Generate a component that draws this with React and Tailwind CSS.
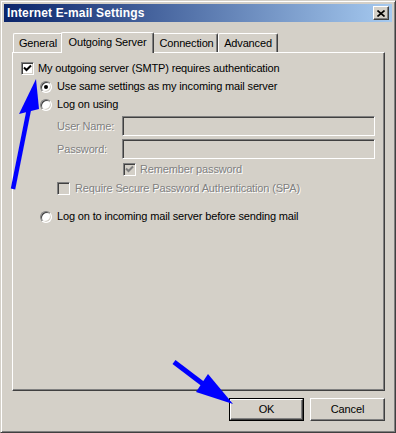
const face = 'bg-[#d4d0c8]'
const raised =
  'border border-t-white border-l-white border-r-[#404040] border-b-[#404040] shadow-[inset_-1px_-1px_0_#808080]'
const sunken =
  'border border-t-[#808080] border-l-[#808080] border-r-white border-b-white shadow-[inset_1px_1px_0_#404040,inset_-1px_-1px_0_#d4d0c8]'
const disabledText = 'text-[#808080] [text-shadow:1px_1px_0_#ffffff]'

function Checkbox({ checked, disabled }) {
  return (
    <div className={`flex h-[13px] w-[13px] shrink-0 items-center justify-center ${sunken} ${disabled ? 'bg-[#d4d0c8]' : 'bg-white'}`}>
      {checked && (
        <svg width="9" height="9" viewBox="0 0 9 9">
          <polyline points="1,3.5 3.5,6 8,1.5" fill="none" stroke={disabled ? '#808080' : '#000'} strokeWidth="2" />
        </svg>
      )}
    </div>
  )
}

function Radio({ checked }) {
  return (
    <div className={`flex h-[12px] w-[12px] shrink-0 items-center justify-center rounded-full bg-white ${sunken}`}>
      {checked && <div className="h-[4px] w-[4px] rounded-full bg-black" />}
    </div>
  )
}

function Tab({ label, selected, className = '' }) {
  if (selected) {
    return (
      <div
        className={`relative z-10 -mx-[2px] -mb-px flex h-[21px] items-start justify-center whitespace-nowrap rounded-t-[2px] border-t border-l border-r border-t-white border-l-white border-r-[#404040] ${face} pt-[3px] shadow-[inset_-1px_0_0_#808080] ${className}`}
      >
        {label}
      </div>
    )
  }
  return (
    <div
      className={`flex h-[19px] items-start justify-center whitespace-nowrap rounded-t-[2px] border-t border-l border-r border-t-white border-l-white border-r-[#404040] ${face} pt-[3px] shadow-[inset_-1px_0_0_#808080] ${className}`}
    >
      {label}
    </div>
  )
}

function Arrows() {
  return (
    <svg className="pointer-events-none absolute left-0 top-0" width="396" height="433" viewBox="0 0 396 433">
      <line x1="12" y1="188" x2="28" y2="108" stroke="#0000ff" strokeWidth="4.5" />
      <polygon points="35,78 18,113 38,108" fill="#0000ff" />
      <line x1="173" y1="361" x2="202" y2="383" stroke="#0000ff" strokeWidth="5" />
      <polygon points="232,403 195,391 207,373" fill="#0000ff" />
    </svg>
  )
}

export default function App() {
  return (
    <div
      className={`relative h-[433px] w-[396px] overflow-hidden ${face} border border-t-[#d4d0c8] border-l-[#d4d0c8] border-r-[#404040] border-b-[#404040] p-[3px] text-[11px] leading-[13px] tracking-[-0.15px] text-black shadow-[inset_1px_1px_0_#ffffff,inset_-1px_-1px_0_#808080]`}
      style={{ fontFamily: '"Liberation Sans", Arial, sans-serif' }}
    >
      {/* title bar */}
      <div className="flex h-[18px] items-center justify-between bg-[linear-gradient(to_right,#0a246a,#a6caf0)] pl-[3px] pr-[3px]">
        <span className="whitespace-nowrap text-[12px] font-bold tracking-[0.15px] text-white">Internet E-mail Settings</span>
        <div className={`flex h-[14px] w-[16px] items-center justify-center ${face} ${raised}`}>
          <svg width="8" height="7" viewBox="0 0 8 7">
            <path d="M0.5 0.5 L7.5 6.5 M7.5 0.5 L0.5 6.5" stroke="#000" strokeWidth="1.6" />
          </svg>
        </div>
      </div>

      <div className="whitespace-nowrap pl-[8px] pt-[10px]">
        {/* tabs */}
        <div className="flex items-end pl-[1px]">
          <Tab label="General" className="w-[50px]" />
          <Tab label="Outgoing Server" selected className="w-[93px]" />
          <Tab label="Connection" className="w-[66px] pl-[3px]" />
          <Tab label="Advanced" className="w-[60px]" />
        </div>

        {/* panel */}
        <div className={`h-[339px] w-[373px] ${raised}`}>
          <div className="ml-[8px] mt-[9px] flex items-center gap-[4px]">
            <Checkbox checked />
            <span>My outgoing server (SMTP) requires authentication</span>
          </div>

          <div className="ml-[27px] mt-[5px] flex items-center gap-[5px]">
            <Radio checked />
            <span>Use same settings as my incoming mail server</span>
          </div>
          <div className="ml-[27px] mt-[5px] flex items-center gap-[5px]">
            <Radio />
            <span>Log on using</span>
          </div>

          <div className="ml-[44px] mt-[5px] flex items-center">
            <span className={`w-[65px] ${disabledText}`}>User Name:</span>
            <div className={`h-[20px] w-[253px] ${face} ${sunken}`} />
          </div>
          <div className="ml-[44px] mt-[3px] flex items-center">
            <span className={`w-[65px] ${disabledText}`}>Password:</span>
            <div className={`h-[20px] w-[253px] ${face} ${sunken}`} />
          </div>

          <div className="ml-[110px] mt-[4px] flex items-center gap-[4px]">
            <Checkbox checked disabled />
            <span className={disabledText}>Remember password</span>
          </div>
          <div className="ml-[44px] mt-[6px] flex items-center gap-[5px]">
            <Checkbox disabled />
            <span className={disabledText}>Require Secure Password Authentication (SPA)</span>
          </div>

          <div className="ml-[27px] mt-[15px] flex items-center gap-[5px]">
            <Radio />
            <span>Log on to incoming mail server before sending mail</span>
          </div>
        </div>

        {/* buttons */}
        <div className="mt-[7px] flex w-[373px] justify-end gap-[6px]">
          <div className="h-[23px] w-[75px] border border-black">
            <div className={`flex h-full w-full items-center justify-center ${raised}`}>OK</div>
          </div>
          <div className={`flex h-[23px] w-[75px] items-center justify-center ${raised}`}>Cancel</div>
        </div>
      </div>

      <Arrows />
    </div>
  )
}
